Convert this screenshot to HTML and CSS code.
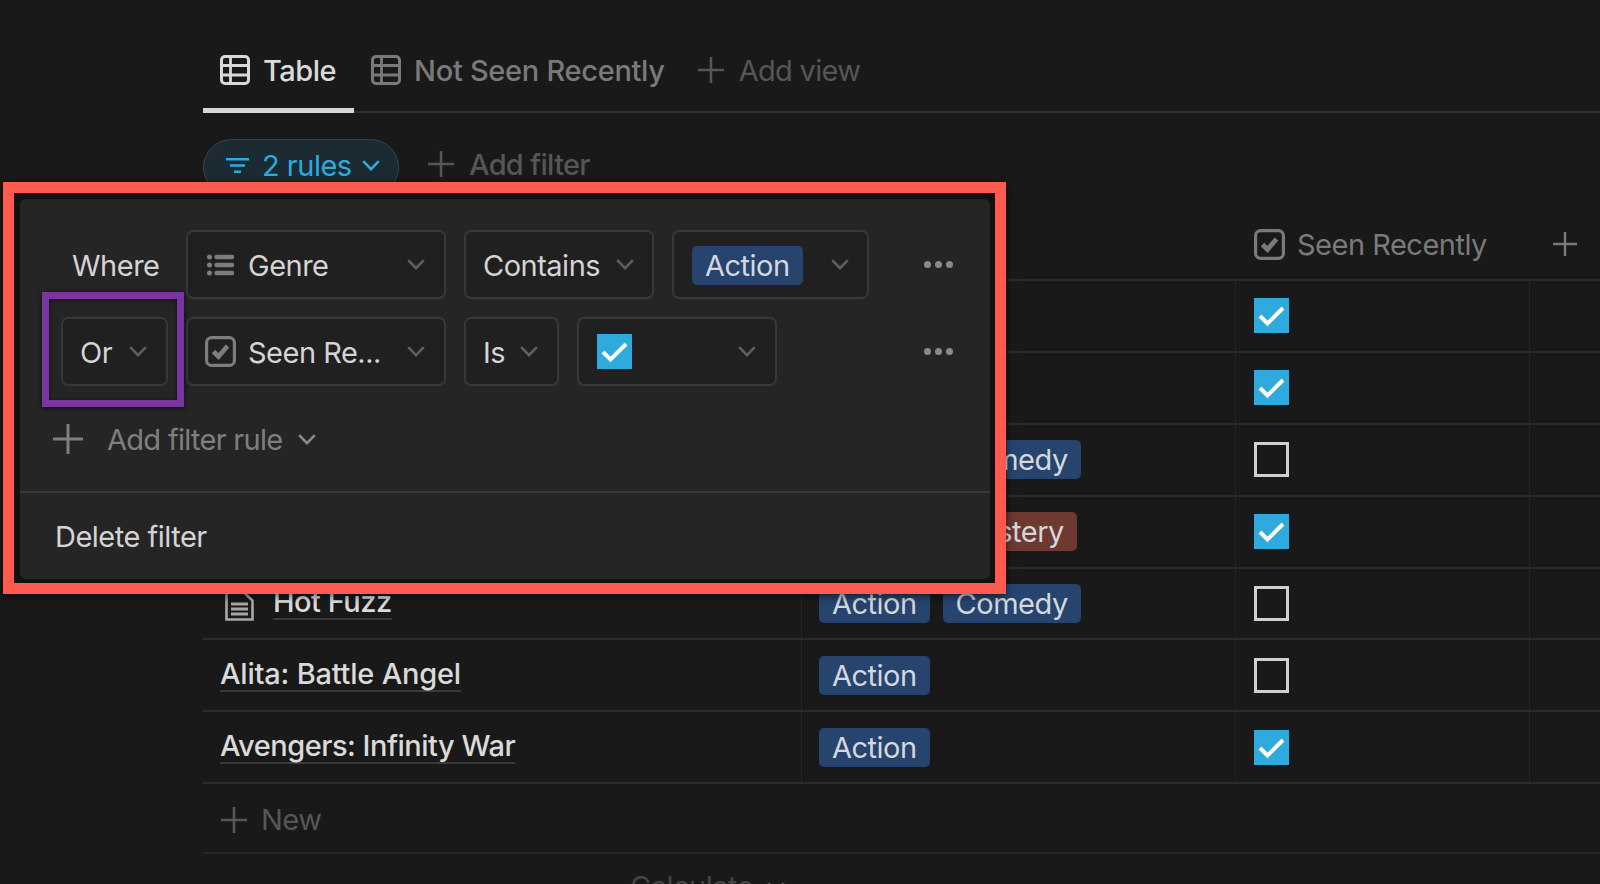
FILE: index.html
```html
<!DOCTYPE html>
<html lang="en">
<head>
<meta charset="utf-8">
<title>Filter rules</title>
<link rel="stylesheet" href="styles.css">
</head>
<body>
<svg class="sprite" aria-hidden="true">
  <symbol id="i-table" viewBox="0 0 30 30"><rect x="1.5" y="1.5" width="27" height="27" rx="3.5" fill="none" stroke="currentColor" stroke-width="3"/><path d="M1.5 10.500h27M1.5 20h27M10.500 1.500v27" fill="none" stroke="currentColor" stroke-width="2.800"/></symbol>
  <symbol id="i-plus" viewBox="0 0 26 26"><path d="M13 0v26M0 13h26" fill="none" stroke="currentColor" stroke-width="2.600"/></symbol>
  <symbol id="i-chev" viewBox="0 0 18 11"><path d="M1.200 1.200L9 9.200l7.800-8" fill="none" stroke="currentColor" stroke-width="2.600"/></symbol>
  <symbol id="i-check" viewBox="0 0 31 31"><rect x="1.600" y="1.600" width="27.800" height="27.800" rx="5" fill="none" stroke="currentColor" stroke-width="3.200"/><path d="M8.500 15.500l5 5 9-10.500" fill="none" stroke="currentColor" stroke-width="4.800"/></symbol>
  <symbol id="i-tick" viewBox="0 0 35 35"><path d="M6 18l7.500 7.500L29 10" fill="none" stroke="#fff" stroke-width="4"/></symbol>
  <symbol id="i-list" viewBox="0 0 27 22"><circle cx="2.500" cy="3" r="2.500" fill="currentColor"/><circle cx="2.500" cy="11" r="2.500" fill="currentColor"/><circle cx="2.500" cy="19" r="2.500" fill="currentColor"/><path d="M9.500 3h15.500M9.500 11h15.500M9.500 19h15.500" fill="none" stroke="currentColor" stroke-width="4.400" stroke-linecap="round"/></symbol>
  <symbol id="i-doc" viewBox="0 0 29 30"><path d="M1.500 1.500H19l8.500 8V28.500H1.500z" fill="none" stroke="currentColor" stroke-width="2.600"/><path d="M6 13h17M6 18h17M6 23h17" fill="none" stroke="currentColor" stroke-width="3"/></symbol>
</svg>

<main class="page">
  <nav class="tabs">
    <a class="tab tab-active"><svg class="ico-table"><use href="#i-table"/></svg>Table</a>
    <a class="tab tab-muted"><svg class="ico-table"><use href="#i-table"/></svg>Not Seen Recently</a>
    <a class="tab tab-add"><svg class="ico-plus"><use href="#i-plus"/></svg>Add view</a>
  </nav>

  <div class="filters">
    <button class="pill">
      <svg class="ico-filter" viewBox="0 0 23 15"><path d="M0 1.200h23M4 7.500h15M8 13.800h7" fill="none" stroke="currentColor" stroke-width="2.400"/></svg>
      <span>2 rules</span>
      <svg class="ico-chev"><use href="#i-chev"/></svg>
    </button>
    <span class="add-filter"><svg class="ico-plus"><use href="#i-plus"/></svg>Add filter</span>
  </div>

  <section class="table">
    <div class="row head">
      <div class="cell"></div>
      <div class="cell"></div>
      <div class="cell"><svg class="ico-check"><use href="#i-check"/></svg>Seen Recently</div>
      <div class="cell"><svg class="ico-plus-sm"><use href="#i-plus"/></svg></div>
    </div>
    <div class="row">
      <div class="cell"></div>
      <div class="cell"><span class="tag">Action</span></div>
      <div class="cell"><span class="box box-on"><svg><use href="#i-tick"/></svg></span></div>
      <div class="cell"></div>
    </div>
    <div class="row">
      <div class="cell"></div>
      <div class="cell"><span class="tag">Action</span></div>
      <div class="cell"><span class="box box-on"><svg><use href="#i-tick"/></svg></span></div>
      <div class="cell"></div>
    </div>
    <div class="row">
      <div class="cell"></div>
      <div class="cell"><span class="tag">Action</span><span class="tag">Comedy</span></div>
      <div class="cell"><span class="box"></span></div>
      <div class="cell"></div>
    </div>
    <div class="row">
      <div class="cell"></div>
      <div class="cell"><span class="tag">Action</span><span class="tag tag-red">Mystery</span></div>
      <div class="cell"><span class="box box-on"><svg><use href="#i-tick"/></svg></span></div>
      <div class="cell"></div>
    </div>
    <div class="row">
      <div class="cell cell-title"><svg class="ico-doc"><use href="#i-doc"/></svg><span class="title">Hot Fuzz</span></div>
      <div class="cell"><span class="tag">Action</span><span class="tag">Comedy</span></div>
      <div class="cell"><span class="box"></span></div>
      <div class="cell"></div>
    </div>
    <div class="row">
      <div class="cell cell-title"><span class="title title-wide">Alita: Battle Angel</span></div>
      <div class="cell"><span class="tag">Action</span></div>
      <div class="cell"><span class="box"></span></div>
      <div class="cell"></div>
    </div>
    <div class="row">
      <div class="cell cell-title"><span class="title">Avengers: Infinity War</span></div>
      <div class="cell"><span class="tag">Action</span></div>
      <div class="cell"><span class="box box-on"><svg><use href="#i-tick"/></svg></span></div>
      <div class="cell"></div>
    </div>
    <div class="new-row"><svg class="ico-plus"><use href="#i-plus"/></svg>New</div>
    <div class="calc">Calculate <svg class="ico-chev"><use href="#i-chev"/></svg></div>
  </section>
</main>

<div class="red-frame">
  <div class="panel">
    <div class="rule">
      <span class="where">Where</span>
      <div class="select sel-prop"><svg class="ico-list"><use href="#i-list"/></svg><span class="sel-text">Genre</span><svg class="ico-chev"><use href="#i-chev"/></svg></div>
      <div class="select sel-contains"><span class="sel-text">Contains</span><svg class="ico-chev"><use href="#i-chev"/></svg></div>
      <div class="select sel-action"><span class="tag tag-sel">Action</span><svg class="ico-chev"><use href="#i-chev"/></svg></div>
      <span class="dots"><i></i><i></i><i></i></span>
    </div>
    <div class="rule">
      <div class="select sel-or"><span class="sel-text">Or</span><svg class="ico-chev"><use href="#i-chev"/></svg></div>
      <div class="select sel-prop"><svg class="ico-check-sm"><use href="#i-check"/></svg><span class="sel-text">Seen Re...</span><svg class="ico-chev"><use href="#i-chev"/></svg></div>
      <div class="select sel-is"><span class="sel-text">Is</span><svg class="ico-chev"><use href="#i-chev"/></svg></div>
      <div class="select sel-val"><span class="box box-on"><svg><use href="#i-tick"/></svg></span><svg class="ico-chev"><use href="#i-chev"/></svg></div>
      <span class="dots"><i></i><i></i><i></i></span>
    </div>
    <div class="add-rule"><svg class="ico-plus-lg"><use href="#i-plus"/></svg>Add filter rule<svg class="ico-chev"><use href="#i-chev"/></svg></div>
    <div class="delete">Delete filter</div>
    <div class="purple-frame"></div>
  </div>
</div>
</body>
</html>
```

FILE: styles.css
```css
* { box-sizing: border-box; }
html, body { margin: 0; height: 884px; overflow: hidden; }
body {
  background: #191919;
  color: #d4d4d4;
  font-family: Inter, "Liberation Sans", sans-serif;
  font-size: 29px;
  letter-spacing: -0.5px;
  position: relative;
}
.sprite { display: none; }
svg { display: block; flex: none; }

/* page */
.page { padding: 0 0 0 203px; }
.tabs {
  display: flex;
  height: 113px;
  border-bottom: 2px solid #2e2e2e;
  align-items: flex-start;
}
.tab {
  display: flex;
  align-items: center;
  gap: 13px;
  height: 113px;
  padding: 32px 18px 0 17px;
  border-bottom: 5px solid transparent;
}
.tab-active { border-bottom-color: #d6d6d6; color: #d9d9d9; font-weight: 500; }
.tab-muted { color: #7a7a7a; font-weight: 500; padding-right: 16px; letter-spacing: -0.3px; }
.tab-add { color: #565656; gap: 15px; letter-spacing: -0.7px; }
.ico-table { width: 30px; height: 30px; }
.ico-plus { width: 26px; height: 26px; }
.ico-chev { width: 18px; height: 11px; color: #5f5f5f; }

.filters {
  display: flex;
  align-items: flex-start;
  padding-top: 26px;
  height: 96px;
}
.pill {
  display: flex;
  align-items: center;
  height: 57px;
  width: 196px;
  padding: 0 0 4px 22px;
  border: 1.5px solid #274a63;
  border-radius: 29px;
  background: #1c2a34;
  color: #2eaadc;
  font: inherit;
  letter-spacing: inherit;
}
.ico-filter { width: 23px; height: 15px; margin-right: 13px; }
.pill .ico-chev { color: #2eaadc; margin-left: 10px; }
.add-filter {
  display: flex;
  align-items: center;
  gap: 15px;
  height: 50px;
  margin-left: 29px;
  color: #565656;
  font-weight: 500;
  letter-spacing: -0.7px;
}

/* table */
.row {
  display: grid;
  grid-template-columns: 599px 434px 294px 71px;
  height: 71.9px;
  border-bottom: 2px solid #2b2b2b;
}
.head { height: 72px; }
.cell {
  display: flex;
  align-items: center;
  gap: 13px;
  padding: 0 17px;
  border-right: 1px solid #252525;
  min-width: 0;
}
.cell:nth-child(3) { padding-left: 18px; }
.cell:last-child { border-right: none; }
.head .cell { border-right: none; color: #7a7a7a; gap: 12px; }
.ico-check { width: 31px; height: 31px; }
.ico-plus-sm { width: 24px; height: 24px; color: #7a7a7a; margin-left: 6px; }
.cell-title { font-weight: 500; color: #dadada; }
.title { border-bottom: 2px solid #3a3a3a; line-height: 33px; margin-bottom: 2px; }
.title-wide { letter-spacing: -0.22px; }
.ico-doc { width: 29px; height: 30px; color: #a8a8a8; margin: 4px 6px 0 5px; }
.tag {
  display: inline-flex;
  align-items: center;
  height: 39px;
  padding: 0 13px;
  border-radius: 5px;
  background: #26446e;
  color: #d4d7de;
}
.tag-red { background: #6e3930; }
.box {
  display: block;
  width: 35px;
  height: 35px;
  border: 3px solid #d0d0d0;
  flex: none;
}
.box-on { border: none; background: #2eaadc; }
.box svg { width: 35px; height: 35px; }

.new-row {
  display: flex;
  align-items: center;
  gap: 14px;
  height: 70px;
  padding: 3px 0 0 18px;
  border-bottom: 2px solid #262626;
  color: #565656;
}
.calc {
  display: flex;
  align-items: center;
  gap: 14px;
  padding: 15px 0 0 427px;
  color: #454545;
  line-height: 36px;
}

/* popup */
.red-frame {
  position: absolute;
  left: 3px;
  top: 182px;
  width: 1003px;
  height: 412px;
  border: 11px solid #ff5a4d;
  background: #111;
  padding: 6px 5px 4px 6px;
  box-shadow: 0 2px 8px rgba(0, 0, 0, 0.6);
}
.panel {
  position: relative;
  height: 380px;
  background: #252525;
  border-radius: 6px;
  padding-top: 31px;
}
.rule {
  display: flex;
  align-items: stretch;
  gap: 18px;
  height: 69px;
  margin-bottom: 18px;
  padding: 0 37px 0 41px;
}
.where {
  width: 107px;
  padding: 2px 0 0 11px;
  display: flex;
  align-items: center;
  color: #d4d4d4;
}
.select {
  display: flex;
  align-items: center;
  background: #202020;
  border: 2px solid #383838;
  border-radius: 7px;
  padding: 0 19px 0 17px;
  flex: none;
}
.sel-text { flex: 1; white-space: nowrap; padding-top: 2px; }
.sel-prop { width: 260px; }
.sel-contains { width: 190px; padding-right: 18px; }
.sel-action { width: 197px; justify-content: space-between; padding: 0 18px; }
.sel-or { width: 107px; }
.sel-is { width: 95px; }
.sel-val { width: 200px; justify-content: space-between; padding-left: 18px; }
.ico-list { width: 27px; height: 22px; color: #7d7d7d; margin: 0 14px 0 2px; }
.ico-check-sm { width: 31px; height: 31px; color: #7d7d7d; margin-right: 12px; }
.tag-sel { height: 39px; margin-top: 2px; }
.dots { display: flex; gap: 4px; margin-left: auto; align-items: center; }
.dots i { width: 7px; height: 7px; border-radius: 50%; background: #8a8a8a; display: block; }
.add-rule {
  display: flex;
  align-items: center;
  height: 70px;
  padding-left: 33px;
  color: #7f7f7f;
  letter-spacing: -0.7px;
}
.ico-plus-lg { width: 30px; height: 30px; margin-right: 24px; color: #7f7f7f; }
.add-rule .ico-chev { margin-left: 15px; color: #8a8a8a; }
.delete {
  border-top: 2px solid #383838;
  margin-top: 17px;
  padding: 26px 0 0 35px;
  color: #d4d4d4;
}
.purple-frame {
  position: absolute;
  left: 22px;
  top: 93px;
  width: 142px;
  height: 115px;
  border: 7px solid #7a35a0;
  box-shadow: 0 1px 5px rgba(0, 0, 0, 0.7), inset 0 1px 5px rgba(0, 0, 0, 0.6);
  pointer-events: none;
}
```
